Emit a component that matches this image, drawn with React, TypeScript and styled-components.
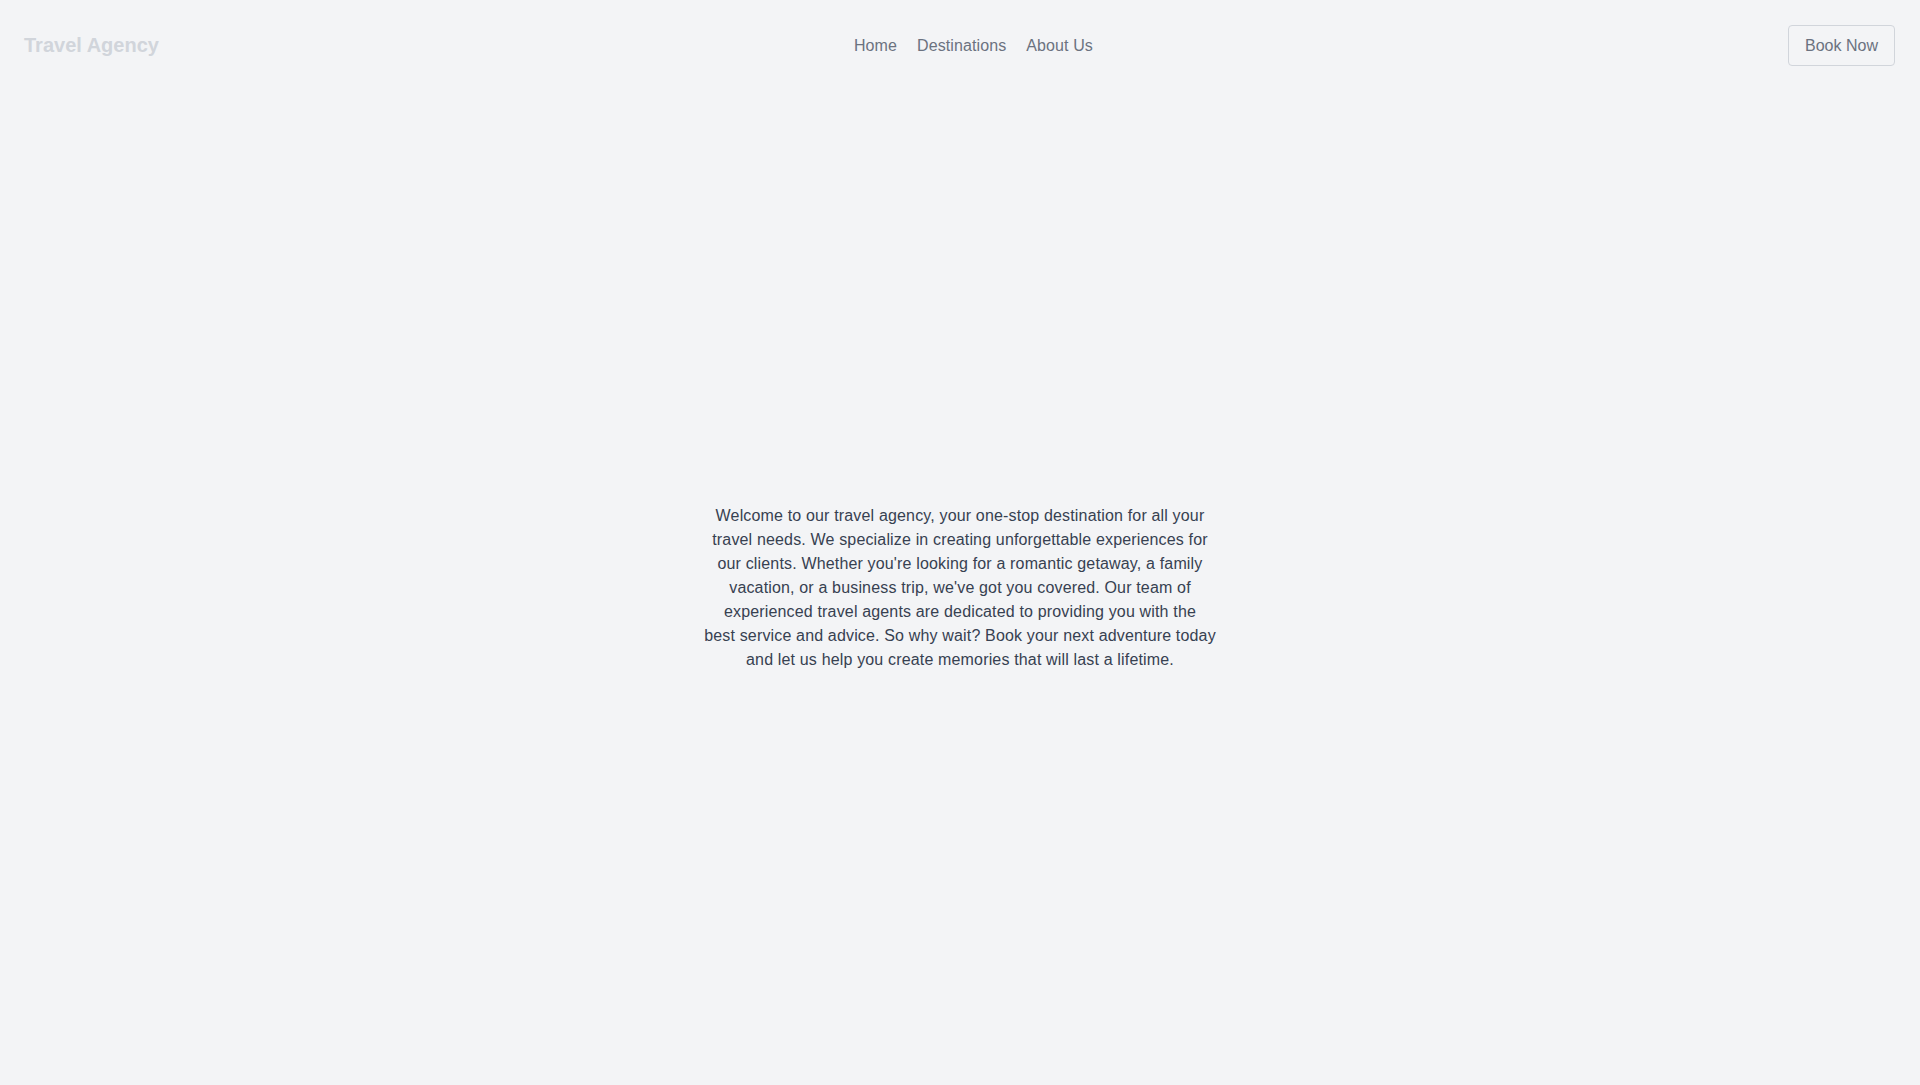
import React from "react";
import styled, { createGlobalStyle } from "styled-components";

const Global = createGlobalStyle`
  html, body { margin: 0; padding: 0; background: #f3f4f6; }
  body { font-family: "Liberation Sans", Arial, sans-serif; -webkit-font-smoothing: antialiased; }
  * { box-sizing: border-box; }
`;

const Page = styled.div`
  min-height: 1085px;
  display: flex;
  flex-direction: column;
  background: #f3f4f6;
`;

const Header = styled.header`
  display: flex;
  align-items: center;
  justify-content: space-between;
  padding: 25px 25px 24px 24px;
`;

const Logo = styled.div`
  font-size: 20px;
  font-weight: 700;
  color: #d1d5db;
`;

const Nav = styled.nav`
  display: flex;
  gap: 20px;
`;

const NavLink = styled.a`
  font-size: 16px;
  color: #6b7280;
  letter-spacing: 0.1px;
  text-decoration: none;
  cursor: pointer;
`;

const Button = styled.button`
  font-family: inherit;
  font-size: 16px;
  color: #6b7280;
  background: transparent;
  border: 1px solid #d1d5db;
  border-radius: 4px;
  padding: 0;
  height: 41px;
  width: 107px;
  white-space: nowrap;
  cursor: pointer;
`;

const Main = styled.main`
  flex: 1;
  display: flex;
  align-items: center;
  justify-content: center;
`;

const Text = styled.p`
  margin: 0;
  display: flex;
  flex-direction: column;
  align-items: center;
  text-align: center;
  font-size: 16px;
  line-height: 24px;
  letter-spacing: 0.16px;
  color: #374151;
`;

const Line = styled.span`
  display: block;
  white-space: nowrap;
`;

const LINES = [
  "Welcome to our travel agency, your one-stop destination for all your",
  "travel needs. We specialize in creating unforgettable experiences for",
  "our clients. Whether you're looking for a romantic getaway, a family",
  "vacation, or a business trip, we've got you covered. Our team of",
  "experienced travel agents are dedicated to providing you with the",
  "best service and advice. So why wait? Book your next adventure today",
  "and let us help you create memories that will last a lifetime.",
];

export default function App() {
  return (
    <>
      <Global />
      <Page>
        <Header>
          <Logo>Travel Agency</Logo>
          <Nav>
            <NavLink>Home</NavLink>
            <NavLink>Destinations</NavLink>
            <NavLink>About Us</NavLink>
          </Nav>
          <Button>Book Now</Button>
        </Header>
        <Main>
          <Text>
            {LINES.map((l, i) => (
              <Line key={i}>{l}</Line>
            ))}
          </Text>
        </Main>
      </Page>
    </>
  );
}
